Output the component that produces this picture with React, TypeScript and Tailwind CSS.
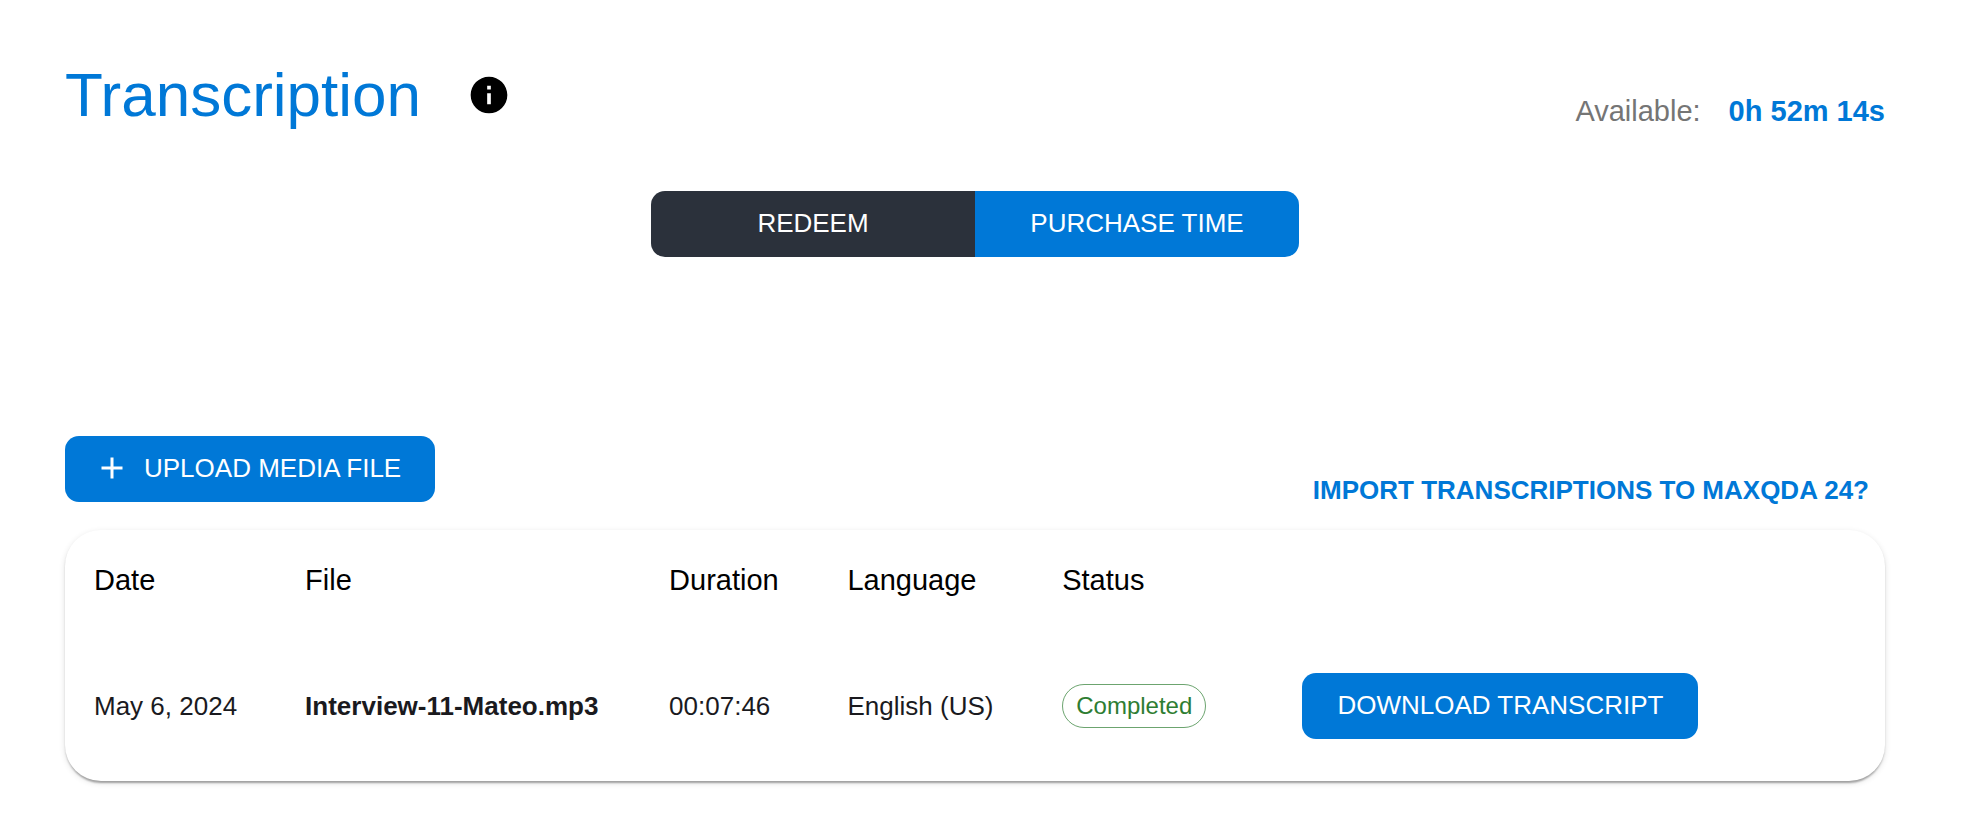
import type { ReactNode } from "react";
import { MdAdd, MdInfo } from "react-icons/md";

interface Transcript {
  date: string;
  file: string;
  duration: string;
  language: string;
  status: string;
}

const transcripts: Transcript[] = [
  {
    date: "May 6, 2024",
    file: "Interview-11-Mateo.mp3",
    duration: "00:07:46",
    language: "English (US)",
    status: "Completed",
  },
];

const headings = ["Date", "File", "Duration", "Language", "Status"];

function ActionButton({ className = "", children }: { className?: string; children: ReactNode }) {
  return (
    <button
      type="button"
      className={`flex h-[66px] items-center justify-center bg-[#0078d7] pb-0.5 text-[26px] whitespace-nowrap text-white uppercase ${className}`}
    >
      {children}
    </button>
  );
}

export default function App() {
  return (
    <main className="bg-white pt-[55px] pr-[83px] pb-10 pl-[65px] font-['Liberation_Sans',Arial,sans-serif] text-[26px] text-[#1a1a1e]">
      <header className="flex items-end justify-between">
        <div className="flex items-center gap-[46px]">
          <h1 className="text-[62px] leading-20 text-[#0078d7]">Transcription</h1>
          <button type="button" aria-label="About transcription" className="text-black">
            <MdInfo className="size-11" />
          </button>
        </div>
        <p className="flex gap-7 pb-1 text-[29px] leading-10 text-[#757575]">
          <span>Available:</span>
          <strong className="text-[#0078d7]">0h 52m 14s</strong>
        </p>
      </header>

      <div className="mx-auto mt-14 grid w-[648px] grid-cols-2 overflow-hidden rounded-[14px]">
        <ActionButton className="bg-[#2b313b]!">Redeem</ActionButton>
        <ActionButton>Purchase time</ActionButton>
      </div>

      <div className="mt-[179px] flex items-end justify-between">
        <ActionButton className="gap-3.5 rounded-[14px] pr-[34px] pl-[29px]">
          <MdAdd className="size-9" />
          Upload media file
        </ActionButton>
        <a href="#import" className="px-4 leading-6 font-bold text-[#0078d7] uppercase">
          Import transcriptions to MAXQDA 24?
        </a>
      </div>

      <section
        aria-label="Transcripts"
        className="mt-7 rounded-[36px] shadow-[0_4px_2px_-2px_rgba(0,0,0,0.2),0_2px_2px_rgba(0,0,0,0.14),0_2px_6px_rgba(0,0,0,0.12)]"
      >
        <table className="w-full table-fixed text-left">
          <colgroup>
            <col className="w-[11.6%]" />
            <col className="w-[20%]" />
            <col className="w-[9.8%]" />
            <col className="w-[11.8%]" />
            <col className="w-[13.2%]" />
            <col />
          </colgroup>
          <thead>
            <tr className="h-[101px] text-[29px] text-black">
              {headings.map((heading) => (
                <th key={heading} scope="col" className="pl-[29px] font-normal">
                  {heading}
                </th>
              ))}
              <td />
            </tr>
          </thead>
          <tbody>
            {transcripts.map((item) => (
              <tr key={item.file} className="h-[150px] whitespace-nowrap">
                <td className="pl-[29px]">{item.date}</td>
                <td className="pl-[29px] font-bold">{item.file}</td>
                <td className="pl-[29px]">{item.duration}</td>
                <td className="pl-[29px]">{item.language}</td>
                <td className="pl-[29px]">
                  <span className="inline-flex h-11 items-center rounded-full border border-[#2e7d32]/70 px-[13px] align-middle text-2xl text-[#2e7d32]">
                    {item.status}
                  </span>
                </td>
                <td className="pl-[29px]">
                  <ActionButton className="rounded-[14px] px-[35px]">Download transcript</ActionButton>
                </td>
              </tr>
            ))}
          </tbody>
        </table>
      </section>
    </main>
  );
}
